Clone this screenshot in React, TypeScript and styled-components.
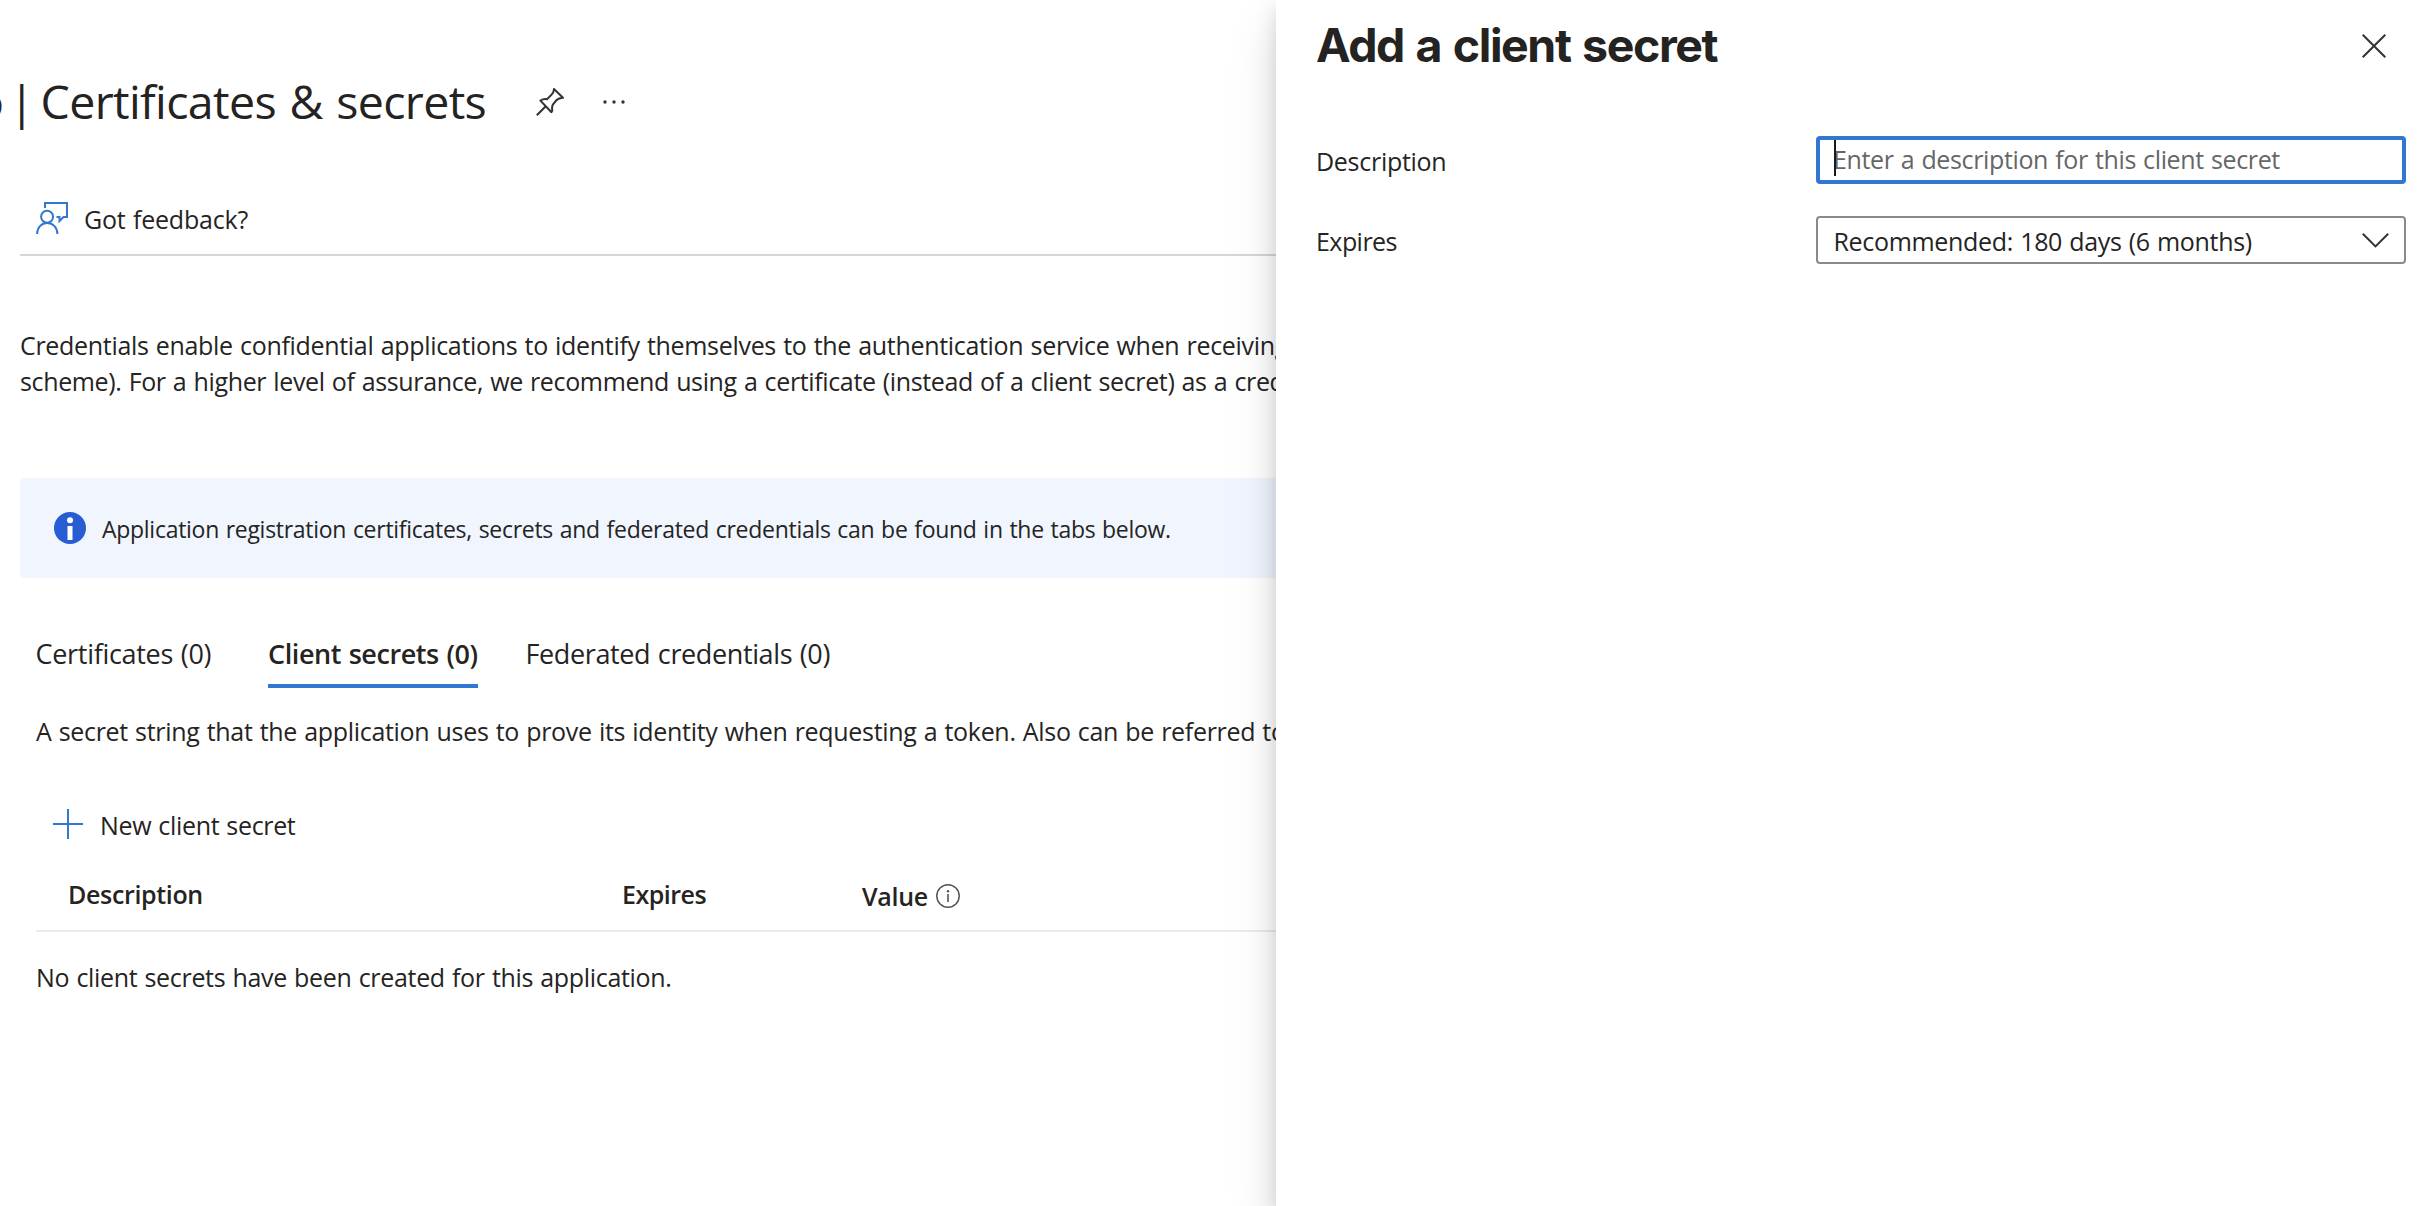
import React from "react";
import styled, { createGlobalStyle } from "styled-components";

const GlobalStyle = createGlobalStyle`
  * { box-sizing: border-box; }
  body {
    margin: 0;
    background: #fff;
    color: #252423;
    font-family: "Open Sans", "Noto Sans", sans-serif;
    font-size: 25px;
    line-height: 36px;
    word-spacing: 1px;
  }
`;

const Shell = styled.div`
  display: grid;
  grid-template-columns: 1276px 1fr;
  height: 1206px;
  overflow: hidden;
`;

const Text = styled.span<{ $track?: number }>`
  white-space: nowrap;
  letter-spacing: ${(p) => p.$track ?? 0}px;
`;

/* ---------- main blade ---------- */

const Main = styled.main`
  display: flex;
  flex-direction: column;
  min-width: 0;
  overflow: hidden;
  padding-top: 71px;
`;

const TitleRow = styled.header`
  display: flex;
  align-items: center;
  height: 60px;
`;

const Title = styled.h1`
  display: flex;
  margin: 0;
  font-size: 46.5px;
  font-weight: 400;
  line-height: 60px;
  word-spacing: 2px;
  color: #242322;
`;

const AppNameTail = styled.span`
  display: flex;
  justify-content: flex-end;
  width: 4px;
  overflow: hidden;
`;

const Divider = styled.span`
  width: 36.5px;
  padding-left: 5px;
`;

const IconButton = styled.button<{ $gap?: number }>`
  display: flex;
  padding: 2px 0 0;
  margin: 0 0 0 ${(p) => p.$gap ?? 0}px;
  border: 0;
  background: none;
`;

const Toolbar = styled.div`
  display: flex;
  align-items: center;
  gap: 15px;
  height: 70px;
  margin: 55px 0 0 20px;
  padding: 0 0 4px 16px;
  border-bottom: 2px solid #d6d6d6;
`;

const CommandLabel = styled(Text)`
  padding-top: 2px;
`;

const Intro = styled.p`
  display: flex;
  flex-direction: column;
  margin: 71px 0 0 20px;
`;

const InfoBar = styled.div`
  display: flex;
  align-items: center;
  gap: 16px;
  height: 100px;
  margin: 79px 0 0 20px;
  padding-left: 34px;
  border-radius: 4px 0 0 4px;
  background: #f0f5fe;
  font-size: 23px;
`;

const InfoText = styled(Text)`
  padding-top: 2px;
`;

const TabList = styled.div`
  display: flex;
  margin: 57.5px 0 0 35.5px;
  font-size: 27px;
`;

const Tab = styled.div<{ $active?: boolean; $width: number; $gap?: number }>`
  width: ${(p) => p.$width}px;
  margin-left: ${(p) => p.$gap ?? 0}px;
  padding-bottom: 12.5px;
  border-bottom: 4px solid ${(p) => (p.$active ? "#3277d2" : "transparent")};
  font-weight: ${(p) => (p.$active ? 600 : 400)};
`;

const TabBody = styled.section`
  display: flex;
  flex-direction: column;
  margin-left: 36px;
  padding-top: 25.3px;
`;

const CommandRow = styled.div`
  display: flex;
  align-items: center;
  gap: 17px;
  height: 48px;
  margin-top: 50.7px;
  padding-left: 17px;
`;

const TableHead = styled.div`
  display: grid;
  grid-template-columns: 554px 240px 1fr;
  align-items: center;
  height: 62px;
  margin-top: 22px;
  padding: 0 0 11px 32px;
  border-bottom: 2px solid #ebebeb;
  font-weight: 600;
`;

const ValueHead = styled.div`
  display: flex;
  align-items: center;
  gap: 8px;
  padding-top: 3px;
`;

const EmptyRow = styled.div`
  margin-top: 27.3px;
`;

/* ---------- side panel ---------- */

const Panel = styled.aside`
  position: relative;
  z-index: 1;
  padding: 0 28px 0 40px;
  background: #fff;
  box-shadow: 0 26px 48px rgba(0, 0, 0, 0.12), 0 8px 20px rgba(0, 0, 0, 0.14);
`;

const PanelHeader = styled.header`
  display: flex;
  align-items: center;
  justify-content: space-between;
  height: 90px;
  padding-right: 20px;
`;

const PanelTitle = styled.h2`
  margin: 0;
  font-family: Inter, sans-serif;
  font-size: 46.5px;
  font-weight: 650;
  line-height: 60px;
  letter-spacing: -1.42px;
  word-spacing: 2px;
  color: #242322;
`;

const Form = styled.form`
  display: grid;
  gap: 32px;
  padding-top: 46px;
`;

const Field = styled.div`
  display: grid;
  grid-template-columns: 500px 590px;
  align-items: center;
  height: 48px;
`;

const Label = styled.label<{ $track: number }>`
  padding-top: 1px;
  letter-spacing: ${(p) => p.$track}px;
`;

const InputFrame = styled.div`
  position: relative;
  height: 48px;
`;

const Input = styled.input`
  display: block;
  width: 100%;
  height: 48px;
  padding: 0 13px 2px;
  border: 4px solid #3277d2;
  border-radius: 4px;
  outline: 0;
  font: inherit;
  letter-spacing: -0.36px;
  word-spacing: 1px;
  &::placeholder {
    color: #666;
    opacity: 1;
  }
`;

const Caret = styled.span`
  position: absolute;
  top: 4px;
  left: 18px;
  width: 2px;
  height: 36px;
  background: #1b1a19;
`;

const Select = styled.div`
  display: flex;
  align-items: center;
  justify-content: space-between;
  height: 48px;
  padding: 1px 15px 0 15.5px;
  border: 2px solid #8a8a8a;
  border-radius: 4px;
`;

/* ---------- icons ---------- */

const PinIcon = () => (
  <svg width="28" height="28" viewBox="0 0 28 28" fill="none" stroke="#333" strokeWidth="2" strokeLinejoin="round">
    <path d="M18 1 27 9.7Q22.6 10 20.6 12L17 16.4Q15.6 18.6 16.3 22.4L15.5 24.2 4.4 12.6Q7.4 10.6 11 11.2L15.6 6.6Q17.8 4.6 18 1Z" />
    <path d="M9.8 18.2.8 27.2" />
  </svg>
);

const MoreIcon = () => (
  <svg width="22" height="4" viewBox="0 0 22 4" fill="#333">
    <circle cx="2" cy="2" r="1.7" />
    <circle cx="11" cy="2" r="1.7" />
    <circle cx="20" cy="2" r="1.7" />
  </svg>
);

const FeedbackIcon = () => (
  <svg width="33" height="32" viewBox="0 0 33 32" fill="none" stroke="#3277d2" strokeWidth="2">
    <path d="M9 6V1H31V15H27.5L23.5 19V15H20.5" />
    <circle cx="11.1" cy="14.8" r="6" />
    <path d="M1.1 32C1.1 25.5 5.4 21 11.2 21S21.4 25.5 21.4 32" />
  </svg>
);

const InfoFilledIcon = () => (
  <svg width="32" height="32" viewBox="0 0 32 32">
    <circle cx="16" cy="16" r="16" fill="#275cd3" />
    <circle cx="16" cy="8.2" r="3" fill="#fff" />
    <rect x="13.5" y="14" width="5" height="14" fill="#fff" />
  </svg>
);

const InfoOutlineIcon = () => (
  <svg width="24" height="24" viewBox="0 0 24 24">
    <circle cx="12" cy="12" r="11.2" fill="none" stroke="#555" strokeWidth="1.5" />
    <circle cx="12" cy="7.2" r="1.2" fill="#555" />
    <path d="M12 10v8" stroke="#555" strokeWidth="1.6" />
  </svg>
);

const PlusIcon = () => (
  <svg width="30" height="30" viewBox="0 0 30 30" stroke="#3277d2" strokeWidth="2">
    <path d="M0 15H30M15 0V30" />
  </svg>
);

const CloseIcon = () => (
  <svg width="24" height="24" viewBox="0 0 24 24" stroke="#333" strokeWidth="2">
    <path d="M.7.7 23.3 23.3M23.3.7.7 23.3" />
  </svg>
);

const ChevronIcon = () => (
  <svg width="27" height="15" viewBox="0 0 27 15" fill="none" stroke="#333" strokeWidth="2">
    <path d="M.8.8 13.5 13.4 26.2.8" />
  </svg>
);

export default function App() {
  return (
    <>
      <GlobalStyle />
      <Shell>
        <Main>
          <TitleRow>
            <Title>
              <AppNameTail>o</AppNameTail>
              <Divider>|</Divider>
              <Text $track={-0.63}>Certificates &amp; secrets</Text>
            </Title>
            <IconButton $gap={50} aria-label="Pin"><PinIcon /></IconButton>
            <IconButton $gap={39} aria-label="More"><MoreIcon /></IconButton>
          </TitleRow>

          <Toolbar>
            <FeedbackIcon />
            <CommandLabel $track={-0.18}>Got feedback?</CommandLabel>
          </Toolbar>

          <Intro>
            <Text $track={-0.31}>
              Credentials enable confidential applications to identify themselves to the authentication service when receiving
            </Text>
            <Text $track={-0.36}>
              scheme). For a higher level of assurance, we recommend using a certificate (instead of a client secret) as a credential.
            </Text>
          </Intro>

          <InfoBar>
            <InfoFilledIcon />
            <InfoText $track={-0.28}>
              Application registration certificates, secrets and federated credentials can be found in the tabs below.
            </InfoText>
          </InfoBar>

          <TabList>
            <Tab $width={180}><Text $track={-0.3}>Certificates (0)</Text></Tab>
            <Tab $active $width={210} $gap={52.5}><Text $track={-0.42}>Client secrets (0)</Text></Tab>
            <Tab $width={310} $gap={47.5}><Text $track={-0.38}>Federated credentials (0)</Text></Tab>
          </TabList>

          <TabBody>
            <Text $track={-0.31}>
              A secret string that the application uses to prove its identity when requesting a token. Also can be referred to
            </Text>
            <CommandRow>
              <PlusIcon />
              <CommandLabel $track={-0.34}>New client secret</CommandLabel>
            </CommandRow>
            <TableHead>
              <Text $track={-0.34}>Description</Text>
              <Text $track={-0.5}>Expires</Text>
              <ValueHead>
                <Text $track={-0.3}>Value</Text>
                <InfoOutlineIcon />
              </ValueHead>
            </TableHead>
            <EmptyRow>
              <Text $track={-0.32}>No client secrets have been created for this application.</Text>
            </EmptyRow>
          </TabBody>
        </Main>

        <Panel>
          <PanelHeader>
            <PanelTitle>Add a client secret</PanelTitle>
            <IconButton aria-label="Close"><CloseIcon /></IconButton>
          </PanelHeader>
          <Form>
            <Field>
              <Label $track={-0.28}>Description</Label>
              <InputFrame>
                <Input placeholder="Enter a description for this client secret" />
                <Caret />
              </InputFrame>
            </Field>
            <Field>
              <Label $track={-0.55}>Expires</Label>
              <Select>
                <Text $track={-0.32}>Recommended: 180 days (6 months)</Text>
                <ChevronIcon />
              </Select>
            </Field>
          </Form>
        </Panel>
      </Shell>
    </>
  );
}
